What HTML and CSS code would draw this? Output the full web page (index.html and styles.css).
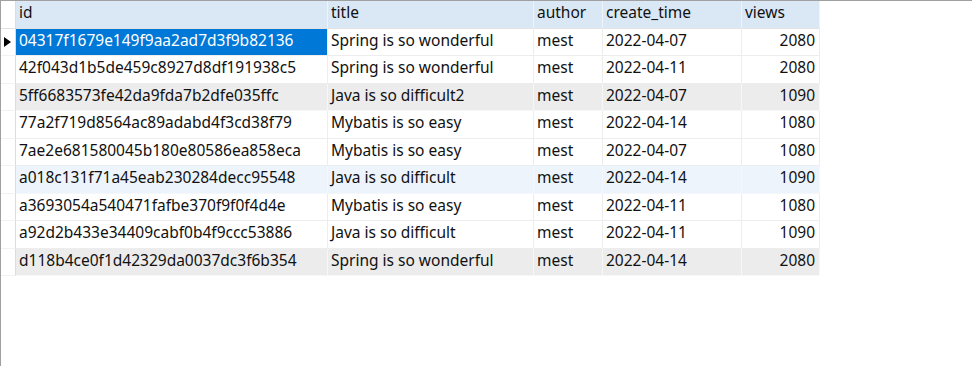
FILE: index.html
```html
<!DOCTYPE html>
<html lang="en">
<head>
    <meta charset="UTF-8">
    <title>blog</title>
    <link rel="stylesheet" href="styles.css">
</head>
<body>
    <div class="grid-view">
        <div class="row head">
            <div class="gutter"></div>
            <div class="cell">id</div>
            <div class="cell">title</div>
            <div class="cell">author</div>
            <div class="cell">create_time</div>
            <div class="cell">views</div>
        </div>
        <div class="row">
            <div class="gutter"><span class="cursor"></span></div>
            <div class="cell selected">04317f1679e149f9aa2ad7d3f9b82136</div>
            <div class="cell">Spring is so wonderful</div>
            <div class="cell">mest</div>
            <div class="cell">2022-04-07</div>
            <div class="cell num">2080</div>
        </div>
        <div class="row">
            <div class="gutter"></div>
            <div class="cell">42f043d1b5de459c8927d8df191938c5</div>
            <div class="cell">Spring is so wonderful</div>
            <div class="cell">mest</div>
            <div class="cell">2022-04-11</div>
            <div class="cell num">2080</div>
        </div>
        <div class="row alt">
            <div class="gutter"></div>
            <div class="cell">5ff6683573fe42da9fda7b2dfe035ffc</div>
            <div class="cell">Java is so difficult2</div>
            <div class="cell">mest</div>
            <div class="cell">2022-04-07</div>
            <div class="cell num">1090</div>
        </div>
        <div class="row">
            <div class="gutter"></div>
            <div class="cell">77a2f719d8564ac89adabd4f3cd38f79</div>
            <div class="cell">Mybatis is so easy</div>
            <div class="cell">mest</div>
            <div class="cell">2022-04-14</div>
            <div class="cell num">1080</div>
        </div>
        <div class="row">
            <div class="gutter"></div>
            <div class="cell">7ae2e681580045b180e80586ea858eca</div>
            <div class="cell">Mybatis is so easy</div>
            <div class="cell">mest</div>
            <div class="cell">2022-04-07</div>
            <div class="cell num">1080</div>
        </div>
        <div class="row hover">
            <div class="gutter"></div>
            <div class="cell">a018c131f71a45eab230284decc95548</div>
            <div class="cell">Java is so difficult</div>
            <div class="cell">mest</div>
            <div class="cell">2022-04-14</div>
            <div class="cell num">1090</div>
        </div>
        <div class="row">
            <div class="gutter"></div>
            <div class="cell">a3693054a540471fafbe370f9f0f4d4e</div>
            <div class="cell">Mybatis is so easy</div>
            <div class="cell">mest</div>
            <div class="cell">2022-04-11</div>
            <div class="cell num">1080</div>
        </div>
        <div class="row">
            <div class="gutter"></div>
            <div class="cell">a92d2b433e34409cabf0b4f9ccc53886</div>
            <div class="cell">Java is so difficult</div>
            <div class="cell">mest</div>
            <div class="cell">2022-04-11</div>
            <div class="cell num">1090</div>
        </div>
        <div class="row alt">
            <div class="gutter"></div>
            <div class="cell">d118b4ce0f1d42329da0037dc3f6b354</div>
            <div class="cell">Spring is so wonderful</div>
            <div class="cell">mest</div>
            <div class="cell">2022-04-14</div>
            <div class="cell num">2080</div>
        </div>
    </div>
</body>
</html>
```

FILE: styles.css
```css
* {
    margin: 0;
    padding: 0;
    box-sizing: border-box;
}
:root {
    --frame: #a0a0a0;
    --line: #ededed;
    --head-bg: #dae8f5;
    --alt-bg: #ececec;
    --hover-bg: #edf4fc;
    --select-bg: #0078d7;
    --text: #111;
}
body {
    font-family: 'Noto Sans', 'Noto Sans CJK SC', sans-serif;
    font-size: 15.5px;
    color: var(--text);
    background: #fff;
    width: 972px;
    height: 366px;
    overflow: hidden;
}
.grid-view {
    height: 366px;
    border-top: 1px solid var(--frame);
    border-left: 1px solid var(--frame);
}
.row {
    display: grid;
    grid-template-columns: 15px 312px 206px 69px 139px 78px;
    width: 819px;
    height: 27.5px;
}
.gutter {
    background: #fff;
    border-right: 1px solid #dcdcdc;
    border-bottom: 1px solid #f2f2f2;
    display: flex;
    align-items: center;
    padding-left: 3px;
}
.cell {
    border-right: 1px solid var(--line);
    border-bottom: 1px solid var(--line);
    padding: 0 4px 0 3px;
    line-height: 23px;
    white-space: nowrap;
    overflow: hidden;
}
.num {
    text-align: right;
}
.head .cell {
    background: var(--head-bg);
    border-right-color: #f0f4f8;
    border-bottom-color: #e2e2e2;
}
.head .gutter {
    border-bottom-color: #e2e2e2;
}
.alt .cell {
    background: var(--alt-bg);
    border-color: #f7f7f7;
}
.hover .cell {
    background: var(--hover-bg);
    border-color: #f4f8fc;
}
.cell.selected {
    background: var(--select-bg);
    color: #fff;
}
.cursor {
    width: 0;
    height: 0;
    border-top: 5.5px solid transparent;
    border-bottom: 5.5px solid transparent;
    border-left: 7px solid #000;
}
```
